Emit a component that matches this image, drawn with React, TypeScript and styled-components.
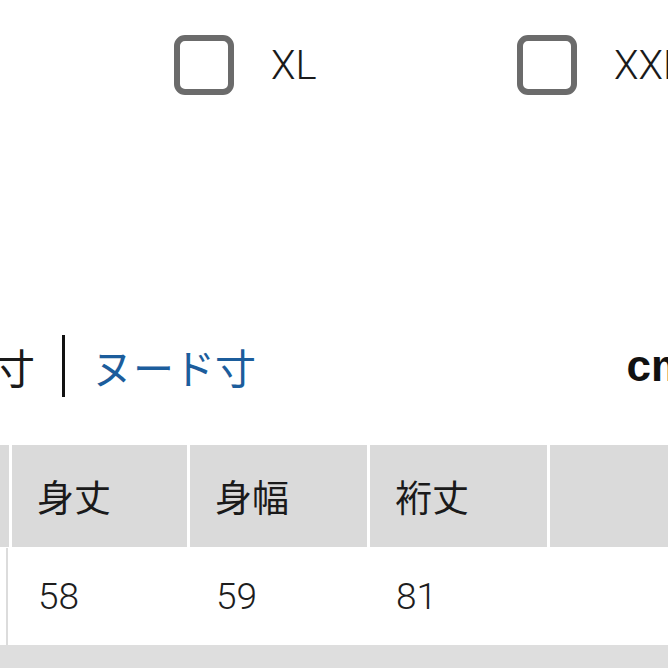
import React from "react"
import styled, { createGlobalStyle } from "styled-components"

const Global = createGlobalStyle`
  html, body {
    margin: 0;
    padding: 0;
    background: #fff;
    overflow: hidden;
  }
  body {
    font-family: Roboto, "Noto Sans CJK JP", sans-serif;
    color: #1d1d1d;
  }
`

const Page = styled.div`
  width: 668px;
  height: 668px;
  overflow: hidden;
  display: flex;
  flex-direction: column;
`

const SizeRow = styled.div`
  display: flex;
  padding: 35px 0 0 174px;
  height: 60px;
`

const SizeOption = styled.label`
  display: flex;
  align-items: center;
  flex: 0 0 343px;
  white-space: nowrap;
`

const Box = styled.span`
  box-sizing: border-box;
  width: 60px;
  height: 60px;
  border: 6px solid #6b6b6b;
  border-radius: 11px;
  flex: 0 0 auto;
`

const SizeLabel = styled.span`
  margin-left: 37px;
  font-size: 40px;
  font-weight: 300;
  color: #1a1a1a;
`

const TabRow = styled.div`
  display: flex;
  align-items: center;
  height: 62px;
  margin-top: 240px;
`

const Tab = styled.span<{ $active?: boolean }>`
  font-family: "Noto Sans CJK JP", sans-serif;
  font-size: 41px;
  line-height: 1;
  color: ${p => (p.$active ? "#1c5d9c" : "#1a1a1a")};
`

const FirstTab = styled(Tab)`
  margin-left: -6px;
`

const Divider = styled.span`
  width: 3px;
  height: 62px;
  background: #111;
  margin: 0 27px 0 27px;
`

const Unit = styled.span`
  margin-left: auto;
  margin-right: -22px;
  font-family: "Liberation Sans", Arial, sans-serif;
  font-weight: 700;
  font-size: 44px;
  color: #111;
`

const Table = styled.div`
  margin-top: 48px;
  display: grid;
  grid-template-columns: 9px 175px 177px 177px 200px;
  column-gap: 3px;
  background: #fff;
`

const HeadCell = styled.div`
  height: 102px;
  background: #dadada;
  display: flex;
  align-items: center;
  padding-left: 25px;
  font-family: "Noto Sans CJK JP", sans-serif;
  font-size: 37px;
  color: #1a1a1a;
  white-space: nowrap;
`

const EdgeHead = styled(HeadCell)`
  padding: 0;
`

const DataCell = styled.div`
  height: 97px;
  margin-top: 1px;
  display: flex;
  align-items: center;
  padding-left: 26px;
  font-size: 37px;
  font-weight: 300;
  color: #1d1d1d;
`

const EdgeData = styled.div`
  height: 97px;
  margin-top: 1px;
  border-right: 2px solid #dcdcdc;
  margin-right: 1px;
`

const FootRow = styled.div`
  flex: 1;
  background: #dedede;
`

const sizes = ["XL", "XXL"]
const heads = ["身丈", "身幅", "裄丈", ""]
const values = ["58", "59", "81", ""]

export default function App() {
  return (
    <Page>
      <Global />
      <SizeRow>
        {sizes.map(s => (
          <SizeOption key={s}>
            <Box />
            <SizeLabel>{s}</SizeLabel>
          </SizeOption>
        ))}
      </SizeRow>
      <TabRow>
        <FirstTab>寸</FirstTab>
        <Divider />
        <Tab $active>ヌード寸</Tab>
        <Unit>cm</Unit>
      </TabRow>
      <Table>
        <EdgeHead />
        {heads.map((h, i) => (
          <HeadCell key={i}>{h}</HeadCell>
        ))}
        <EdgeData />
        {values.map((v, i) => (
          <DataCell key={i}>{v}</DataCell>
        ))}
      </Table>
      <FootRow />
    </Page>
  )
}
